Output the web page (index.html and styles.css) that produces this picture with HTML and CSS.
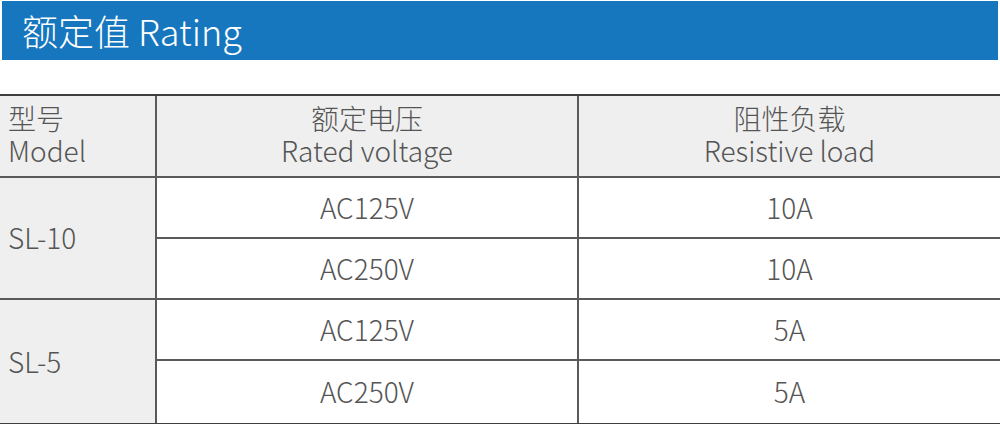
FILE: index.html
```html
<!DOCTYPE html>
<html lang="zh">
<head>
<meta charset="utf-8">
<link rel="stylesheet" href="styles.css">
</head>
<body>
<div class="title-bar"><h1 class="title">额定值 Rating</h1></div>
<div class="rating">
  <div class="cell head model-head"><span class="ln">型号</span><span class="ln">Model</span></div>
  <div class="cell head"><span class="ln">额定电压</span><span class="ln">Rated voltage</span></div>
  <div class="cell head"><span class="ln">阻性负载</span><span class="ln">Resistive load</span></div>

  <div class="cell model">SL-10</div>
  <div class="cell val">AC125V</div>
  <div class="cell val">10A</div>
  <div class="cell val">AC250V</div>
  <div class="cell val">10A</div>

  <div class="cell model">SL-5</div>
  <div class="cell val">AC125V</div>
  <div class="cell val">5A</div>
  <div class="cell val">AC250V</div>
  <div class="cell val">5A</div>
</div>
</body>
</html>
```
FILE: styles.css
```css
html, body {
  margin: 0;
  padding: 0;
  background: #ffffff;
}
body {
  width: 1000px;
  height: 424px;
  overflow: hidden;
  font-family: "Noto Sans CJK SC", "Noto Sans", sans-serif;
  font-weight: 300;
  color: #555555;
}
.title-bar {
  margin: 1px 2px 0 2px;
  height: 59px;
  background: #1676be;
  display: flex;
  align-items: center;
  padding-left: 20px;
}
.title {
  margin: 0;
  font-weight: 300;
  font-size: 36px;
  color: #ffffff;
  line-height: 1;
  padding-bottom: 2px;
}
.rating {
  margin-top: 34px;
  display: grid;
  grid-template-columns: 155px 422px 423px;
  grid-template-rows: 82px 61px 61px 61px 62px;
  border-top: 2px solid #3f3f3f;
  border-bottom: 2px solid #3f3f3f;
}
.cell {
  box-sizing: border-box;
  display: flex;
  align-items: center;
  justify-content: center;
  text-align: center;
  font-size: 28px;
  line-height: 32px;
  border-bottom: 2px solid #5a5a5a;
}
.head {
  background: #efefef;
  border-left: 2px solid #5a5a5a;
  padding-bottom: 4px;
  flex-direction: column;
}
.ln {
  display: block;
  height: 32px;
  line-height: 32px;
}
.model-head {
  border-left: none;
  align-items: flex-start;
  text-align: left;
  padding-left: 8px;
}
.model {
  grid-row: span 2;
  background: #efefef;
  justify-content: flex-start;
  padding-left: 8px;
  padding-bottom: 2px;
}
.val {
  border-left: 2px solid #5a5a5a;
  padding-bottom: 2px;
}
.rating > .cell:last-child,
.rating > .cell:nth-last-child(2),
.rating > .cell:nth-last-child(5) {
  border-bottom: none;
}
```
